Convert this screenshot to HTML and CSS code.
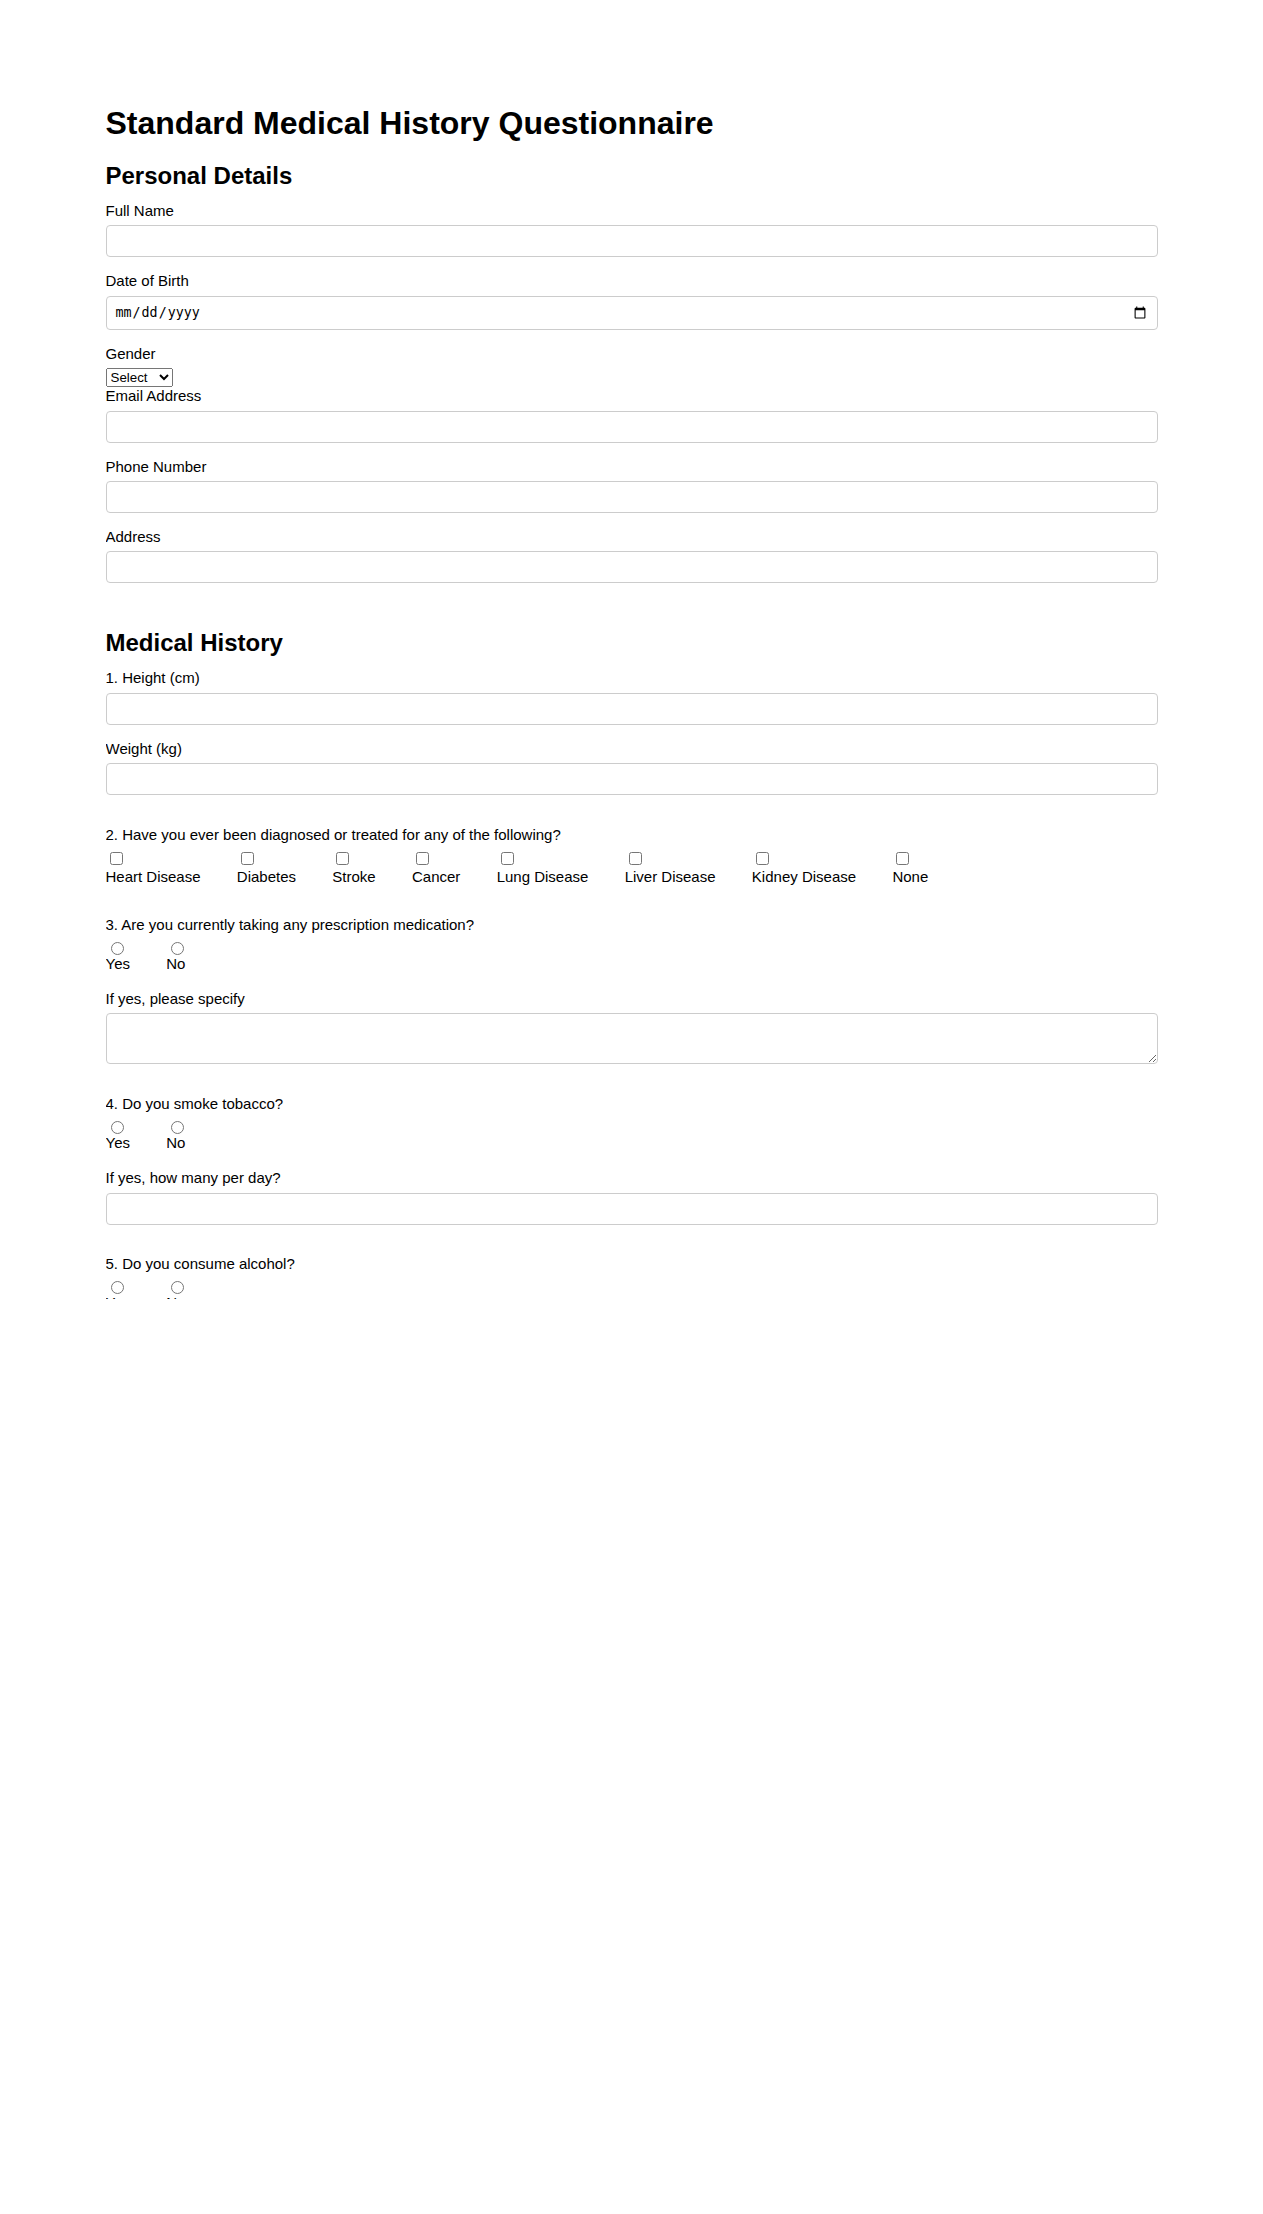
FILE: index.html
```html
<!DOCTYPE html>
<html lang="en">
<head>
<meta charset="utf-8">
<title>Standard Medical History Questionnaire</title>
<link rel="stylesheet" href="styles.css">
</head>
<body>
<div class="page">
  <h1 class="title">Standard Medical History Questionnaire</h1>

  <section class="section">
    <h2 class="section-title">Personal Details</h2>
    <div class="field">
      <label class="field-label" for="full-name">Full Name</label>
      <input class="text-input" type="text" id="full-name">
    </div>
    <div class="field">
      <label class="field-label" for="dob">Date of Birth</label>
      <input class="text-input date-input" type="date" id="dob">
    </div>
    <div class="field field-plain">
      <label class="field-label" for="gender">Gender</label>
      <select class="select-input" id="gender">
        <option>Select</option>
        <option>Male</option>
        <option>Female</option>
        <option>Other</option>
      </select>
    </div>
    <div class="field">
      <label class="field-label" for="email">Email Address</label>
      <input class="text-input" type="email" id="email">
    </div>
    <div class="field">
      <label class="field-label" for="phone">Phone Number</label>
      <input class="text-input" type="tel" id="phone">
    </div>
    <div class="field">
      <label class="field-label" for="address">Address</label>
      <input class="text-input" type="text" id="address">
    </div>
  </section>

  <section class="section">
    <h2 class="section-title">Medical History</h2>

    <div class="question">
      <div class="field">
        <label class="field-label" for="height">1. Height (cm)</label>
        <input class="text-input" type="text" id="height">
      </div>
      <div class="field">
        <label class="field-label" for="weight">Weight (kg)</label>
        <input class="text-input" type="text" id="weight">
      </div>
    </div>

    <div class="question">
      <div class="field-label">2. Have you ever been diagnosed or treated for any of the following?</div>
      <div class="options">
        <label class="option"><input class="check" type="checkbox" name="cond">Heart Disease</label>
        <label class="option"><input class="check" type="checkbox" name="cond">Diabetes</label>
        <label class="option"><input class="check" type="checkbox" name="cond">Stroke</label>
        <label class="option"><input class="check" type="checkbox" name="cond">Cancer</label>
        <label class="option"><input class="check" type="checkbox" name="cond">Lung Disease</label>
        <label class="option"><input class="check" type="checkbox" name="cond">Liver Disease</label>
        <label class="option"><input class="check" type="checkbox" name="cond">Kidney Disease</label>
        <label class="option"><input class="check" type="checkbox" name="cond">None</label>
      </div>
    </div>

    <div class="question">
      <div class="field-label">3. Are you currently taking any prescription medication?</div>
      <div class="options">
        <label class="option"><input class="radio" type="radio" name="med">Yes</label>
        <label class="option"><input class="radio" type="radio" name="med">No</label>
      </div>
      <div class="field">
        <label class="field-label" for="med-detail">If yes, please specify</label>
        <textarea class="text-area" id="med-detail"></textarea>
      </div>
    </div>

    <div class="question">
      <div class="field-label">4. Do you smoke tobacco?</div>
      <div class="options">
        <label class="option"><input class="radio" type="radio" name="smoke">Yes</label>
        <label class="option"><input class="radio" type="radio" name="smoke">No</label>
      </div>
      <div class="field">
        <label class="field-label" for="smoke-count">If yes, how many per day?</label>
        <input class="text-input" type="text" id="smoke-count">
      </div>
    </div>

    <div class="question">
      <div class="field-label">5. Do you consume alcohol?</div>
      <div class="options">
        <label class="option"><input class="radio" type="radio" name="alcohol">Yes</label>
        <label class="option"><input class="radio" type="radio" name="alcohol">No</label>
      </div>
      <div class="field">
        <label class="field-label" for="alcohol-count">If yes, how many drinks per week?</label>
        <input class="text-input" type="text" id="alcohol-count">
      </div>
    </div>
  </section>
</div>
</body>
</html>
```

FILE: styles.css
```css
html, body {
  margin: 0;
  padding: 0;
  background: #ffffff;
}

body {
  font-family: "Liberation Sans", Arial, sans-serif;
  font-size: 16px;
  color: #000000;
}

.page {
  box-sizing: border-box;
  max-width: 1052px;
  margin: 0 auto;
  padding-top: 105px;
  height: 1299px;
  overflow: hidden;
}

.title {
  font-size: 32px;
  font-weight: bold;
  margin: 0 0 19.5px;
}

.section + .section {
  margin-top: 45.5px;
}

.section-title {
  font-size: 24px;
  font-weight: bold;
  margin: 0 0 12.5px;
}

.field {
  margin-bottom: 15px;
}

.field-plain {
  margin-bottom: 0;
}

.field-label {
  display: block;
  font-size: 15px;
  margin-bottom: 6.4px;
}

.text-input,
.text-area {
  display: block;
  box-sizing: border-box;
  width: 100%;
  padding: 8px;
  border: 1px solid #cccccc;
  border-radius: 4px;
  margin: 0;
}

.text-input {
  height: 32px;
}

.date-input {
  height: 34px;
}

.text-area {
  height: 51px;
}

.select-input {
  display: block;
  margin: 0;
}

.question {
  margin-bottom: 30.5px;
}

.options {
  display: flex;
  gap: 36.3px;
  margin-bottom: 18px;
}

.option {
  display: flex;
  flex-direction: column;
  align-items: flex-start;
  font-size: 15px;
}

.check,
.radio {
  display: block;
}
```
